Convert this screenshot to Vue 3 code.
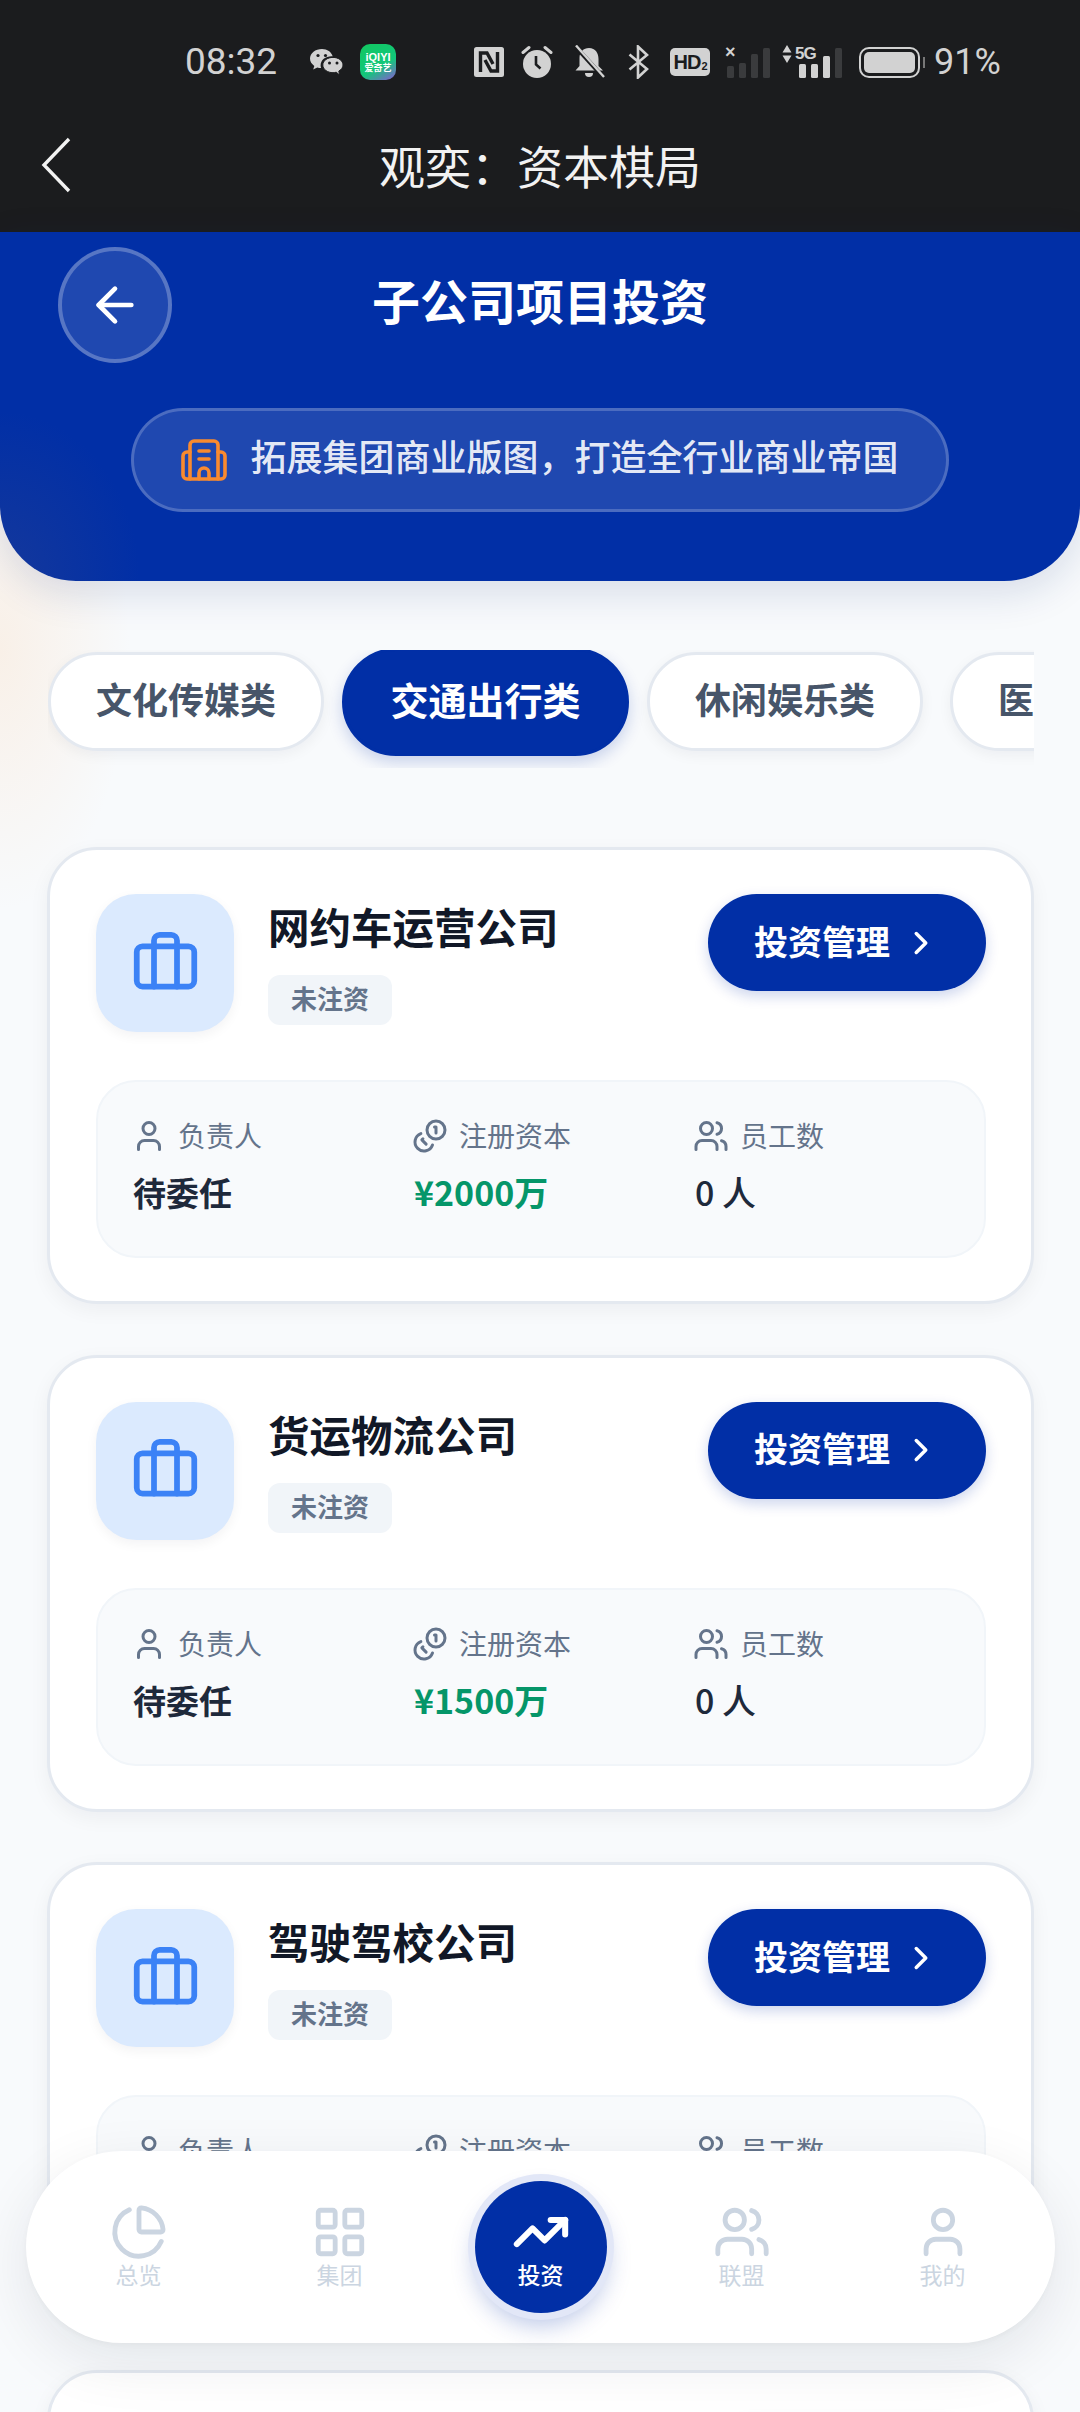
<script setup>
const tabs = [
  { name: '文化传媒类' },
  { name: '交通出行类', active: true },
  { name: '休闲娱乐类' },
  { name: '医疗健康类' },
]
const companies = [
  { name: '网约车运营公司', capital: '¥2000万' },
  { name: '货运物流公司', capital: '¥1500万' },
  { name: '驾驶驾校公司', capital: '¥1000万' },
  { name: '汽车租赁公司', capital: '¥800万' },
]
</script>

<template>
  <div class="page">
    <div class="system">
      <div class="status">
        <div class="status-left">
          <span class="time">08:32</span>
          <svg class="wechat" viewBox="0 0 33 27" fill="#d2d2d2">
            <path d="M12 0C5.4 0 0 4.2 0 9.6c0 3 1.7 5.6 4.3 7.3L3.2 20.6l4.1-2.2c1.2.4 2.5.6 3.8.7-.3-1-.5-1.800-.5-2.700C10.600 11 15.500 7.300 21.500 7.300c.5 0 .8 0 1.200.1C21.500 3 17.200 0 12 0Z"/>
            <path d="M33 16c0-4.500-4.700-7.600-10-7.600S12.800 11.500 12.800 16s4.900 7.700 10.200 7.700c1.100 0 2.200-.2 3.200-.5l3.400 2.800-.8-3.900C31.300 20.600 33 18.500 33 16Z" stroke="#1b1c1e" stroke-width="1"/>
            <circle cx="8" cy="6.500" r="1.600" fill="#1b1c1e"/>
            <circle cx="15.500" cy="6.500" r="1.600" fill="#1b1c1e"/>
            <circle cx="19.500" cy="14" r="1.500" fill="#1b1c1e"/>
            <circle cx="27" cy="14" r="1.500" fill="#1b1c1e"/>
          </svg>
          <div class="iqiyi"><span class="iq-en">iQIYI</span><span class="iq-cn">爱奇艺</span></div>
        </div>
        <div class="status-right">
          <svg class="st-nfc" viewBox="0 0 30 30">
            <rect width="30" height="30" rx="2.500" fill="#d2d2d2"/>
            <path d="M6.500 25V6h6.500l6 11M23.500 5v19h-6.500l-6-11" fill="none" stroke="#1b1c1e" stroke-width="3.400"/>
          </svg>
          <svg class="st-alarm" viewBox="0 0 32 34">
            <circle cx="16" cy="19" r="14" fill="#d2d2d2"/>
            <path d="M2 7.500 8 2.500M30 7.500 24 2.500" stroke="#d2d2d2" stroke-width="3" stroke-linecap="round"/>
            <path d="M15 11v8.500l4.500 4" fill="none" stroke="#1b1c1e" stroke-width="2.600"/>
          </svg>
          <svg class="st-bell" viewBox="0 0 31 34">
            <path d="M15 3c6.500 0 9.500 5 9.500 11v7l4.500 4.500H1.500L5.500 21v-8C5.500 7 9.500 3 15 3Z" fill="#d2d2d2"/>
            <path d="M11 28h8a4 4 0 0 1-8 0Z" fill="#d2d2d2"/>
            <path d="M1 1 30 33" stroke="#1b1c1e" stroke-width="4.200"/>
            <path d="M2 0.500 30 32" stroke="#d2d2d2" stroke-width="2.400"/>
          </svg>
          <svg class="st-bt" viewBox="0 0 21 34">
            <path d="M1.500 9.500 19 24 10 32.500V1.500L19 10 1.500 24.500" fill="none" stroke="#d2d2d2" stroke-width="2.600"/>
          </svg>
          <div class="st-hd"><span>HD</span><small>2</small></div>
          <div class="st-signal one">
            <span class="st-x">×</span>
            <i class="off h1"></i><i class="off h2"></i><i class="off h3"></i><i class="off h4"></i>
          </div>
          <div class="st-signal two">
            <div class="st-five">
              <svg viewBox="0 0 10 20" width="10" height="20"><path d="M5 1 9.500 8.500h-9ZM5 19 .5 11.500h9Z" fill="#d2d2d2"/></svg>
              <span>5G</span>
            </div>
            <i class="on h2"></i><i class="on h3"></i><i class="on h4"></i><i class="off h5"></i>
          </div>
          <div class="st-batt"><div class="st-fill"></div><span class="st-tip"></span></div>
          <span class="pct">91%</span>
        </div>
      </div>
      <div class="appbar">
        <svg class="appbar-back" viewBox="0 0 30 56"><path d="M28 2 3 28l25 26" fill="none" stroke="#f2f2f2" stroke-width="3.400"/></svg>
        <span class="appbar-title">观奕：资本棋局</span>
      </div>
    </div>

    <header class="hero">
      <div class="hero-top">
        <button class="round-back">
          <svg viewBox="0 0 24 24" width="56" height="56" fill="none" stroke="#fff" stroke-width="2" stroke-linecap="round" stroke-linejoin="round"><path d="m12 19-7-7 7-7"/><path d="M19 12H5"/></svg>
        </button>
        <h1>子公司项目投资</h1>
      </div>
      <div class="slogan">
        <svg viewBox="0 0 46 46" width="46" height="46" fill="none" stroke="#f98a2e" stroke-width="3.600" stroke-linecap="round" stroke-linejoin="round">
          <path d="M9 15H6a4 4 0 0 0-4 4v19a4 4 0 0 0 4 4h34a4 4 0 0 0 4-4V19a4 4 0 0 0-4-4h-3"/>
          <path d="M9 42V8a4 4 0 0 1 4-4h20a4 4 0 0 1 4 4v34"/>
          <path d="M18 14h10"/><path d="M18 22h10"/>
          <path d="M18 42v-6a5 5 0 0 1 10 0v6"/>
        </svg>
        <span>拓展集团商业版图，打造全行业商业帝国</span>
      </div>
    </header>

    <div class="tabs">
      <div v-for="t in tabs" :key="t.name" class="tab" :class="{ active: t.active }">{{ t.name }}</div>
    </div>

    <main class="list">
      <section v-for="c in companies" :key="c.name" class="card">
        <div class="head">
          <div class="logo">
            <svg viewBox="0 0 24 24" width="69" height="69" fill="none" stroke="#3b82f6" stroke-width="2" stroke-linecap="round" stroke-linejoin="round"><path d="M16 20V4a2 2 0 0 0-2-2h-4a2 2 0 0 0-2 2v16"/><rect width="20" height="14" x="2" y="6" rx="2"/></svg>
          </div>
          <div class="title">
            <h2>{{ c.name }}</h2>
            <span class="tag">未注资</span>
          </div>
          <button class="manage">
            <span>投资管理</span>
            <svg viewBox="0 0 24 24" width="38" height="38" fill="none" stroke="#fff" stroke-width="2.200" stroke-linecap="round" stroke-linejoin="round"><path d="m9 18 6-6-6-6"/></svg>
          </button>
        </div>
        <div class="info">
          <div class="cell">
            <div class="label">
              <svg viewBox="0 0 24 24" width="36" height="36" fill="none" stroke="#64748b" stroke-width="2" stroke-linecap="round" stroke-linejoin="round"><path d="M19 21v-2a4 4 0 0 0-4-4H9a4 4 0 0 0-4 4v2"/><circle cx="12" cy="7" r="4"/></svg>
              <span>负责人</span>
            </div>
            <div class="value">待委任</div>
          </div>
          <div class="cell">
            <div class="label">
              <svg viewBox="0 0 24 24" width="36" height="36" fill="none" stroke="#64748b" stroke-width="2" stroke-linecap="round" stroke-linejoin="round"><circle cx="16" cy="8" r="6"/><path d="M5.910 10.370A6 6 0 1 0 13.660 18"/><path d="M15 6h1v4"/><path d="m7.290 13.880-.7.710 2.820 2.820"/></svg>
              <span>注册资本</span>
            </div>
            <div class="value money">{{ c.capital }}</div>
          </div>
          <div class="cell">
            <div class="label">
              <svg viewBox="0 0 24 24" width="36" height="36" fill="none" stroke="#64748b" stroke-width="2" stroke-linecap="round" stroke-linejoin="round"><path d="M16 21v-2a4 4 0 0 0-4-4H6a4 4 0 0 0-4 4v2"/><circle cx="9" cy="7" r="4"/><path d="M22 21v-2a4 4 0 0 0-3-3.870"/><path d="M16 3.130a4 4 0 0 1 0 7.750"/></svg>
              <span>员工数</span>
            </div>
            <div class="value count">0 人</div>
          </div>
        </div>
      </section>
    </main>

    <nav class="nav">
      <div class="nav-item">
        <svg viewBox="0 0 24 24" width="58" height="58" fill="none" stroke="#cbd5e1" stroke-width="2" stroke-linecap="round" stroke-linejoin="round"><path d="M21 12c.552 0 1.005-.449.95-.998a10 10 0 0 0-8.953-8.951c-.55-.055-.998.398-.998.95v8a1 1 0 0 0 1 1z"/><path d="M21.210 15.890A10 10 0 1 1 8 2.830"/></svg>
        <span>总览</span>
      </div>
      <div class="nav-item">
        <svg viewBox="0 0 24 24" width="58" height="58" fill="none" stroke="#cbd5e1" stroke-width="2" stroke-linecap="round" stroke-linejoin="round"><rect width="7" height="7" x="3" y="3" rx="1"/><rect width="7" height="7" x="14" y="3" rx="1"/><rect width="7" height="7" x="14" y="14" rx="1"/><rect width="7" height="7" x="3" y="14" rx="1"/></svg>
        <span>集团</span>
      </div>
      <div class="nav-item current">
        <div class="nav-disc">
          <svg viewBox="0 0 24 24" width="58" height="58" fill="none" stroke="#fff" stroke-width="2.500" stroke-linecap="round" stroke-linejoin="round"><path d="M16 7h6v6"/><path d="m22 7-8.500 8.500-5-5L2 17"/></svg>
          <span>投资</span>
        </div>
      </div>
      <div class="nav-item">
        <svg viewBox="0 0 24 24" width="58" height="58" fill="none" stroke="#cbd5e1" stroke-width="2" stroke-linecap="round" stroke-linejoin="round"><path d="M16 21v-2a4 4 0 0 0-4-4H6a4 4 0 0 0-4 4v2"/><circle cx="9" cy="7" r="4"/><path d="M22 21v-2a4 4 0 0 0-3-3.870"/><path d="M16 3.130a4 4 0 0 1 0 7.750"/></svg>
        <span>联盟</span>
      </div>
      <div class="nav-item">
        <svg viewBox="0 0 24 24" width="58" height="58" fill="none" stroke="#cbd5e1" stroke-width="2" stroke-linecap="round" stroke-linejoin="round"><path d="M19 21v-2a4 4 0 0 0-4-4H9a4 4 0 0 0-4 4v2"/><circle cx="12" cy="7" r="4"/></svg>
        <span>我的</span>
      </div>
    </nav>
  </div>
</template>

<style>
html, body { margin: 0; background: #f8fafc; }
</style>

<style scoped>
.page {
  position: relative;
  width: 1080px;
  height: 2412px;
  overflow: hidden;
  background:
    radial-gradient(ellipse 130px 260px at 0 650px, rgba(251, 200, 150, 0.2), rgba(251, 200, 150, 0) 100%),
    #f8fafc;
  font-family: "Noto Sans CJK SC", "Noto Sans", sans-serif;
}
h1, h2 { margin: 0; }
button { border: 0; padding: 0; font-family: inherit; }

.system { height: 232px; background: #1b1c1e; }
.status {
  height: 124px;
  box-sizing: border-box;
  padding: 44px 82px 0 185px;
  display: flex;
  justify-content: space-between;
  align-items: flex-start;
}
.status-left, .status-right { display: flex; align-items: center; height: 36px; }
.time { font: 400 37px/36px Roboto, sans-serif; color: #d2d2d2; width: 93px; white-space: nowrap; }
.wechat { width: 33px; height: 27px; margin-left: 32px; }
.iqiyi {
  width: 36px; height: 36px; margin-left: 17px; border-radius: 10px;
  background: linear-gradient(150deg, #12c75f 0%, #12c77a 60%, #8a5ad6 100%);
  display: flex; flex-direction: column; align-items: center; justify-content: center;
  color: #fff; font-weight: 700;
}
.iq-en { font: 700 11px/11px "Liberation Sans", sans-serif; white-space: nowrap; }
.iq-cn { font-size: 9px; line-height: 10px; white-space: nowrap; }
.st-nfc { width: 30px; height: 30px; }
.st-alarm { width: 32px; height: 34px; margin-left: 17px; }
.st-bell { width: 31px; height: 34px; margin-left: 21px; }
.st-bt { width: 21px; height: 34px; margin-left: 23px; }
.st-hd {
  width: 40px; height: 28px; margin-left: 21px; border-radius: 5px; background: #d2d2d2;
  color: #1b1c1e; display: flex; align-items: center; justify-content: center;
  font: 700 20px/28px "Liberation Sans", sans-serif; letter-spacing: -1px;
}
.st-hd small { font-size: 11px; line-height: 11px; margin-top: 8px; margin-left: 1px; }
.st-signal { position: relative; display: flex; align-items: flex-end; gap: 5px; height: 32px; }
.st-signal.one { width: 43px; margin-left: 17px; }
.st-signal.two { width: 60px; margin-left: 12px; padding-left: 17px; box-sizing: border-box; }
.st-signal i { display: block; width: 7px; border-radius: 1.5px; }
.st-signal .on { background: #d2d2d2; }
.st-signal .off { background: #3a3b3d; }
.h1 { height: 12px; } .h2 { height: 15px; } .h3 { height: 24px; } .h4 { height: 30px; } .h5 { height: 30px; }
.st-signal.two .h2 { height: 14px; } .st-signal.two .h3 { height: 14px; } .st-signal.two .h4 { height: 22px; }
.st-x { position: absolute; left: -2px; top: -3px; color: #d2d2d2; font: 700 18px/18px "Liberation Sans", sans-serif; }
.st-five { position: absolute; left: 0; top: -2px; display: flex; align-items: center; gap: 3px; color: #d2d2d2; font: 700 17px/20px "Liberation Sans", sans-serif; letter-spacing: -1px; }
.st-batt {
  position: relative; width: 61px; height: 31px; margin-left: 17px; box-sizing: border-box;
  border: 2px solid #d2d2d2; border-radius: 10px; padding: 3px;
}
.st-fill { height: 100%; background: #d2d2d2; border-radius: 5px; }
.st-tip { position: absolute; right: -7px; top: 8px; width: 2px; height: 11px; background: #777; }
.pct { font: 400 36px/36px Roboto, sans-serif; color: #d2d2d2; margin-left: 14px; width: 64px; white-space: nowrap; }

.appbar { position: relative; height: 108px; display: flex; align-items: center; justify-content: center; }
.appbar-back { position: absolute; left: 41px; top: 13px; width: 30px; height: 56px; }
.appbar-title { font-size: 46px; color: #f2f2f2; line-height: 82px; margin-top: -29px; }

.hero {
  box-sizing: border-box;
  height: 349px;
  padding: 15px 58px 0;
  border-radius: 0 0 76px 76px;
  background:
    radial-gradient(ellipse 140px 170px at 0 349px, rgba(40, 65, 145, 0.5), rgba(40, 65, 145, 0) 100%),
    #012fa6;
  box-shadow: 0 12px 40px rgba(15, 40, 110, 0.14);
}
.hero-top { display: grid; grid-template-columns: 114px 1fr 114px; align-items: center; height: 116px; }
.round-back {
  width: 114px; height: 116px; border-radius: 50%; box-sizing: border-box;
  border: 4px solid rgba(255, 255, 255, 0.25); background: rgba(255, 255, 255, 0.12);
  display: flex; align-items: center; justify-content: center;
}
.hero h1 { grid-column: 2; font-size: 48px; font-weight: 700; color: #fff; text-align: center; line-height: 60px; margin-top: -12px; }
.slogan {
  margin: 45px 73px 0; height: 104px; box-sizing: border-box; padding-bottom: 10px;
  border: 3px solid rgba(255, 255, 255, 0.2); border-radius: 52px;
  background: rgba(255, 255, 255, 0.12);
  display: flex; align-items: center; justify-content: center; gap: 23px;
  color: rgba(255, 255, 255, 0.9); font-size: 36px; font-weight: 500;
  white-space: nowrap;
}
.slogan svg { margin-top: 10px; }

.tabs {
  margin: 69px 46px 0 48px;
  padding: 2px 0 12px;
  display: flex;
  align-items: flex-start;
  gap: 27px;
  overflow: hidden;
}
.tab {
  flex: none; width: 276px; height: 99px; box-sizing: border-box; border-radius: 50px; padding-bottom: 7px;
  background: #fff; border: 3px solid #e4e9f0;
  box-shadow: 0 4px 14px rgba(15, 23, 42, 0.05);
  display: flex; align-items: center; justify-content: center;
  font-size: 36px; font-weight: 700; color: #475569; white-space: nowrap;
}
.tab.active {
  width: 287px; height: 108px; margin: -4px -9px 0; border-radius: 54px;
  background: #012fa6; border-color: #012fa6; color: #fff; font-size: 38px;
  box-shadow: 0 6px 16px rgba(1, 47, 166, 0.2);
}

.list { margin-top: 79px; padding: 0 46px 0 47px; display: flex; flex-direction: column; gap: 50.7px; }
.card {
  flex: none; box-sizing: border-box; height: 457px; padding: 44px 45px 44px 46px;
  background: #fff; border: 3px solid #e4e9f0; border-radius: 50px;
  box-shadow: 0 6px 20px rgba(15, 23, 42, 0.05);
}
.head { display: flex; align-items: flex-start; height: 138px; }
.logo {
  flex: none; width: 138px; height: 138px; border-radius: 40px; background: #dbeafe;
  box-shadow: 0 4px 12px rgba(15, 23, 42, 0.05);
  display: flex; align-items: center; justify-content: center;
}
.title { flex: 1; margin-left: 34px; display: flex; flex-direction: column; align-items: flex-start; }
.title h2 { font-size: 41.500px; font-weight: 700; color: #111827; line-height: 70px; white-space: nowrap; margin-top: -3px; }
.tag {
  margin-top: 14px; width: 124px; height: 50px; box-sizing: border-box; padding-bottom: 5px; border-radius: 12px; background: #f1f5f9;
  font-size: 26px; font-weight: 600; color: #64748b;
  display: flex; align-items: center; justify-content: center;
}
.manage {
  flex: none; width: 278px; height: 97px; box-sizing: border-box; padding-bottom: 5px; border-radius: 49px; background: #012fa6; color: #fff;
  display: flex; align-items: center; justify-content: center; gap: 12px;
  font-size: 34px; font-weight: 700; box-shadow: 0 5px 14px rgba(1, 47, 166, 0.2);
}
.manage svg { margin-top: 5px; }
.info {
  margin-top: 48px; height: 178px; box-sizing: border-box; padding: 33px 36px 0 35px;
  background: #f8fafc; border: 2px solid #f1f5f9; border-radius: 40px;
  display: grid; grid-template-columns: repeat(3, 1fr); column-gap: 28px;
}
.label { display: flex; align-items: center; height: 40px; margin-left: -2px; gap: 11px; font-size: 28px; color: #64748b; white-space: nowrap; }
.label svg { margin-top: 2px; }
.value { margin-top: 15px; font-size: 33px; line-height: 44px; font-weight: 700; color: #1e293b; white-space: nowrap; }
.money { color: #059669; font-size: 34px; }
.count { font-weight: 500; font-size: 34px; }

.nav {
  position: absolute; left: 26px; top: 2151px; width: 1029px; height: 192px; box-sizing: border-box;
  padding: 0 12px; background: #fff; border-radius: 96px;
  box-shadow: 0 18px 60px rgba(15, 23, 42, 0.09), 0 2px 6px rgba(15, 23, 42, 0.03);
  display: grid; grid-template-columns: repeat(5, 1fr); align-items: center;
}
.nav-item { display: flex; flex-direction: column; align-items: center; gap: 1px; color: #cbd5e1; font-size: 23px; line-height: 30px; }
.nav-item span { margin-top: -3px; margin-bottom: 3px; }
.nav-disc {
  width: 132px; height: 132px; border-radius: 50%; background: #012fa6; color: #fff; font-weight: 500;
  display: flex; flex-direction: column; align-items: center; justify-content: center; gap: 1px;
  box-shadow: 0 0 0 7px #e2e7f7, 0 12px 24px rgba(1, 47, 166, 0.28);
}
</style>
